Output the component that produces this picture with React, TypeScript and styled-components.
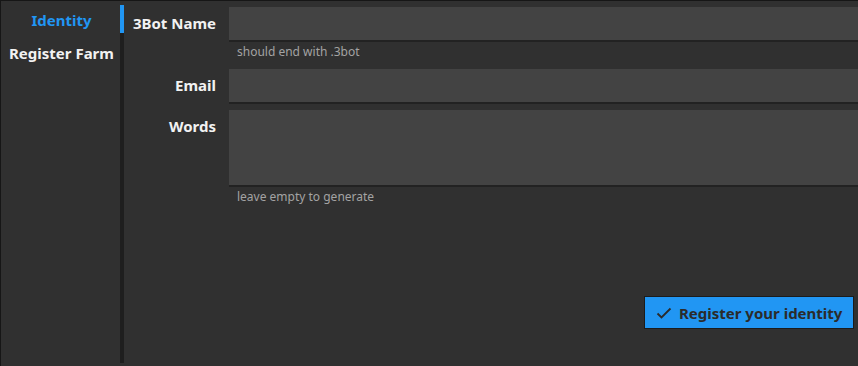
import React from "react";
import styled, { createGlobalStyle } from "styled-components";

const GlobalStyle = createGlobalStyle`
  html, body {
    margin: 0;
    padding: 0;
    background: #303030;
    font-family: "Noto Sans", "Open Sans", sans-serif;
  }
  * { box-sizing: border-box; }
`;

const App = () => {
  return (
    <>
      <GlobalStyle />
      <Window>
        <Nav>
          <NavItem $active>Identity</NavItem>
          <NavItem>Register Farm</NavItem>
        </Nav>
        <TabRail>
          <TabMarker />
        </TabRail>
        <Form>
          <Field>
            <Label>3Bot Name</Label>
            <Input />
          </Field>
          <Hint>should end with .3bot</Hint>
          <Field $spaced>
            <Label>Email</Label>
            <Input />
          </Field>
          <Field>
            <Label>Words</Label>
            <TextArea />
          </Field>
          <Hint>leave empty to generate</Hint>
          <Actions>
            <Button>
              <svg width="16" height="16" viewBox="0 0 16 16" fill="none">
                <path d="M1.5 8.5 L5.5 12.5 L14.5 3.5" stroke="#2b2b2b" strokeWidth="1.8" />
              </svg>
              Register your identity
            </Button>
          </Actions>
        </Form>
      </Window>
    </>
  );
};

export default App;

const Window = styled.div`
  display: flex;
  flex-direction: row;
  width: 858px;
  height: 366px;
  border-top: 1px solid #161616;
  border-left: 1px solid #161616;
  background: #303030;
`;

const Nav = styled.div`
  display: flex;
  flex-direction: column;
  width: 119px;
  padding-top: 3px;
`;

const NavItem = styled.div<{ $active?: boolean }>`
  height: 33px;
  line-height: 32px;
  padding-left: 2px;
  text-align: center;
  font-size: 15px;
  font-weight: 700;
  color: ${(p) => (p.$active ? "#2196f3" : "#f2f2f2")};
  white-space: nowrap;
`;

const TabRail = styled.div`
  width: 4px;
  margin: 4px 0 3px;
  background: #1e1e1e;
`;

const TabMarker = styled.div`
  height: 28px;
  background: #2196f3;
`;

const Form = styled.div`
  flex: 1;
  display: flex;
  flex-direction: column;
  padding-top: 6px;
`;

const Field = styled.div<{ $spaced?: boolean }>`
  display: grid;
  grid-template-columns: 105px 1fr;
  margin-bottom: ${(p) => (p.$spaced ? "6px" : "0")};
`;

const Label = styled.div`
  height: 33px;
  line-height: 33px;
  padding-right: 13px;
  text-align: right;
  font-size: 15px;
  font-weight: 700;
  color: #f2f2f2;
  white-space: nowrap;
`;

const Input = styled.input`
  height: 35px;
  border: none;
  border-bottom: 2px solid #222222;
  background: #434343;
  outline: none;
  color: #f2f2f2;
`;

const TextArea = styled.textarea`
  height: 77px;
  border: none;
  border-bottom: 2px solid #222222;
  background: #434343;
  outline: none;
  resize: none;
  color: #f2f2f2;
`;

const Hint = styled.div`
  height: 27px;
  padding: 2px 0 0 113px;
  font-size: 12px;
  line-height: 16px;
  color: #a3a3a3;
`;

const Actions = styled.div`
  margin-top: auto;
  display: flex;
  justify-content: flex-end;
  padding: 0 4px 37px 0;
`;

const Button = styled.button`
  display: flex;
  align-items: center;
  gap: 7px;
  width: 210px;
  height: 33px;
  padding: 0 0 0 11px;
  border: 1px solid #1c1c1c;
  background: #2196f3;
  color: #2b2b2b;
  font-family: "Noto Sans", "Open Sans", sans-serif;
  font-size: 15px;
  font-weight: 700;
  white-space: nowrap;
`;
